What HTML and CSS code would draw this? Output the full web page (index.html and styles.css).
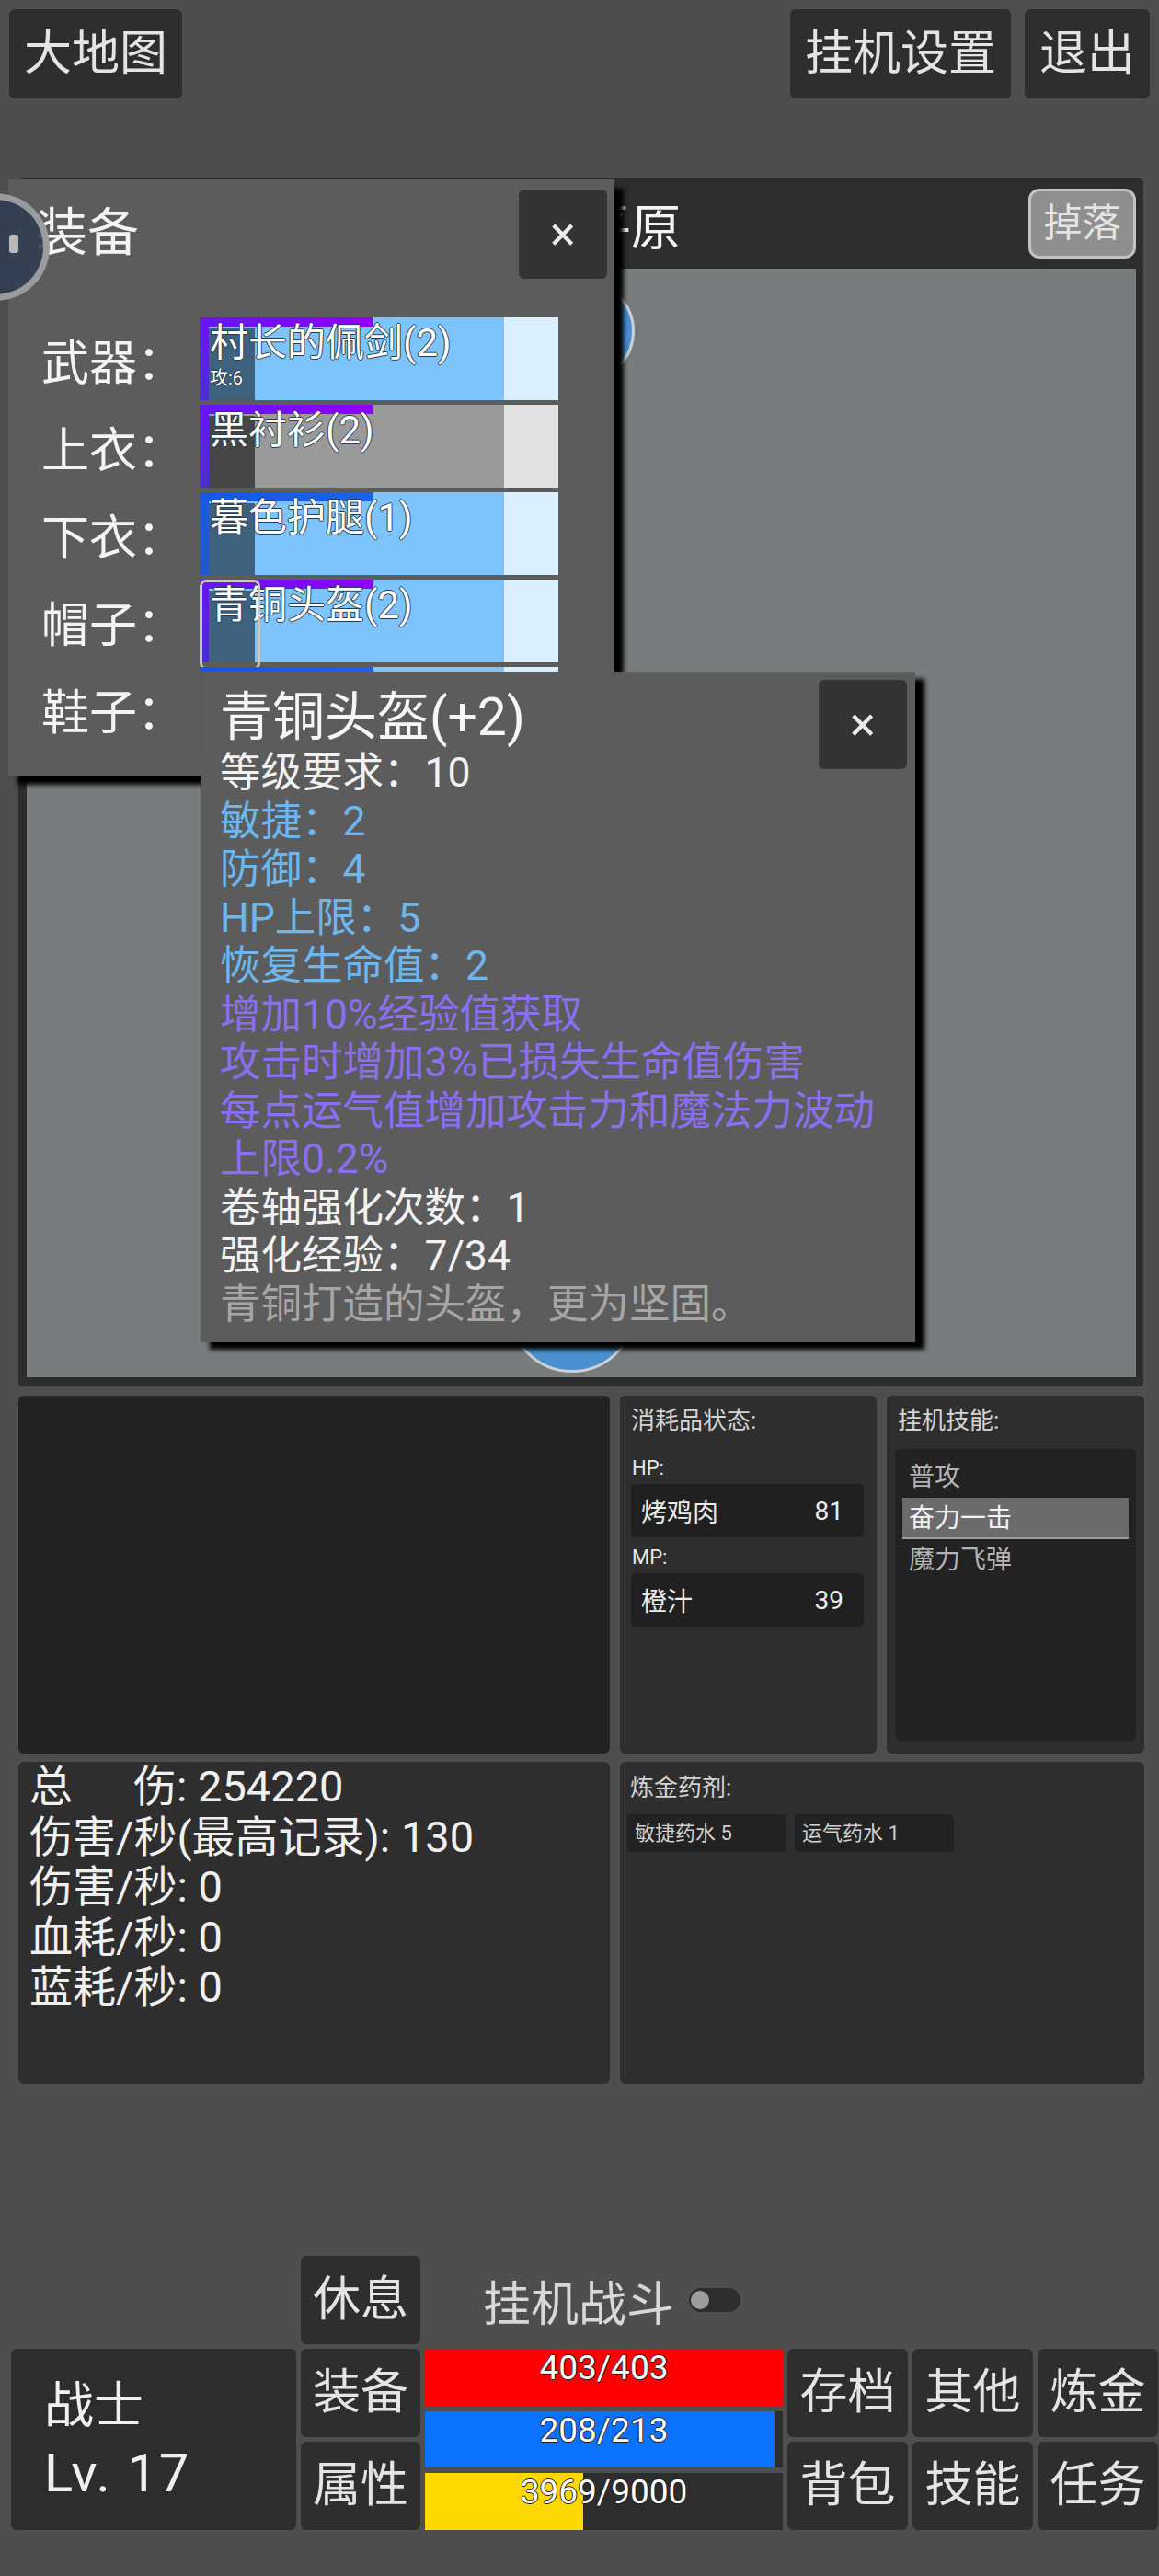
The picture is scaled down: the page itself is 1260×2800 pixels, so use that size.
FILE: index.html
```html
<!DOCTYPE html>
<html lang="zh">
<head>
	<meta charset="UTF-8">
	<title>挂机</title>
	<link rel="stylesheet" href="styles.css">
</head>
<body>
<div class="app">
	<div class="topbar">
		<button class="btn">大地图</button>
		<div class="topbar_right">
			<button class="btn">挂机设置</button>
			<button class="btn">退出</button>
		</div>
	</div>

	<div class="map">
		<div class="map_head">
			<span class="map_title">平原</span>
			<button class="drop_btn">掉落</button>
		</div>
		<div class="map_view">
			<div class="node node_a"></div>
			<div class="node node_b"></div>
		</div>
	</div>

	<div class="info_row">
		<div class="panel log"></div>
		<div class="panel supply">
			<div class="panel_title">消耗品状态:</div>
			<div class="supply_label first">HP:</div>
			<div class="supply_item"><span>烤鸡肉</span><span>81</span></div>
			<div class="supply_label">MP:</div>
			<div class="supply_item"><span>橙汁</span><span>39</span></div>
		</div>
		<div class="panel skills">
			<div class="panel_title">挂机技能:</div>
			<ul class="skill_list">
				<li>普攻</li>
				<li class="on">奋力一击</li>
				<li>魔力飞弹</li>
			</ul>
		</div>
	</div>

	<div class="stats_row">
		<div class="panel stats">
			<div>总<span class="gap"></span>伤: 254220</div>
			<div>伤害/秒(最高记录): 130</div>
			<div>伤害/秒: 0</div>
			<div>血耗/秒: 0</div>
			<div>蓝耗/秒: 0</div>
		</div>
		<div class="panel alchemy">
			<div class="panel_title">炼金药剂:</div>
			<div class="chips">
				<div class="chip">敏捷药水 5</div>
				<div class="chip">运气药水 1</div>
			</div>
		</div>
	</div>

	<div class="control">
		<button class="btn rest">休息</button>
		<div class="auto">挂机战斗<span class="toggle"></span></div>
		<div class="hero">
			<div>战士</div>
			<div class="lv">Lv. 17</div>
		</div>
		<button class="btn c2 r2">装备</button>
		<button class="btn c2 r3">属性</button>
		<div class="bars">
			<div class="bar_line hp"><div class="fill" style="width:100%"></div><span>403/403</span></div>
			<div class="bar_line mp"><div class="fill" style="width:97.7%"></div><span>208/213</span></div>
			<div class="bar_line exp"><div class="fill" style="width:44.1%"></div><span>3969/9000</span></div>
		</div>
		<button class="btn c4 r2">存档</button>
		<button class="btn c5 r2">其他</button>
		<button class="btn c6 r2">炼金</button>
		<button class="btn c4 r3">背包</button>
		<button class="btn c5 r3">技能</button>
		<button class="btn c6 r3">任务</button>
	</div>

	<!-- 装备弹窗 -->
	<div class="equip">
		<div class="equip_head">
			<span class="equip_title">装备</span>
			<button class="close">×</button>
		</div>
		<div class="equip_rows">
			<div class="slot">武器：</div>
			<div class="item purple">
				<div class="item_name">村长的佩剑(2)</div>
				<div class="item_sub">攻:6</div>
			</div>
			<div class="slot">上衣：</div>
			<div class="item purple gray">
				<div class="item_name">黑衬衫(2)</div>
			</div>
			<div class="slot">下衣：</div>
			<div class="item blue">
				<div class="item_name">暮色护腿(1)</div>
			</div>
			<div class="slot">帽子：</div>
			<div class="item purple selected">
				<div class="item_name">青铜头盔(2)</div>
			</div>
			<div class="slot">鞋子：</div>
			<div class="item blue"></div>
		</div>
	</div>

	<!-- 物品详情 -->
	<div class="tip">
		<button class="close">×</button>
		<div class="tip_title">青铜头盔(+2)</div>
		<div class="tip_lines">
			<div class="w">等级要求：10</div>
			<div class="b">敏捷：2</div>
			<div class="b">防御：4</div>
			<div class="b">HP上限：5</div>
			<div class="b">恢复生命值：2</div>
			<div class="p">增加10%经验值获取</div>
			<div class="p">攻击时增加3%已损失生命值伤害</div>
			<div class="p">每点运气值增加攻击力和魔法力波动</div>
			<div class="p">上限0.2%</div>
			<div class="w">卷轴强化次数：1</div>
			<div class="w">强化经验：7/34</div>
			<div class="g">青铜打造的头盔，更为坚固。</div>
		</div>
	</div>

	<div class="ball"></div>
</div>
</body>
</html>
```

FILE: styles.css
```css
* { box-sizing: border-box; }
html, body { margin: 0; padding: 0; background: #4e4e4e; }
body { font-family: Roboto, "Noto Sans CJK SC", sans-serif; color: #e6e6e6; }
ul { margin: 0; padding: 0; } li { list-style: none; }
button { font-family: inherit; cursor: pointer; }

.app { position: relative; width: 1260px; height: 2800px; overflow: hidden; }

.btn { background: #2e2e2e; color: #e4e4e4; border: 0; border-radius: 6px; font-size: 52px; line-height: 1; padding: 0; display: flex; align-items: center; justify-content: center; }

/* 顶部 */
.topbar { display: flex; justify-content: space-between; padding: 10px 10px 0; }
.topbar .btn { height: 97px; padding: 0 16px; }
.topbar_right { display: flex; gap: 15px; }

/* 地图 */
.map { margin: 87px 17px 0 20px; height: 1313px; background: #2d2d2d; border-radius: 4px; padding: 0 8px 10px 9px; display: flex; flex-direction: column; }
.map_head { height: 98px; display: flex; align-items: center; }
.map_title { padding-left: 603px; font-size: 54px; color: #f4f4f4; }
.drop_btn { margin-left: auto; width: 117px; height: 76px; background: #8f8f8f; border: 3px solid #c2c2c2; border-radius: 12px; color: #e4e4e4; font-size: 42px; line-height: 1; padding: 0; }
.map_view { flex: 1; background: #787c7d; position: relative; }
.node { position: absolute; border-radius: 50%; background: #4a8fcf; border: 3px solid #d0d0d0; }
.node_a { left: 551px; top: 13px; width: 110px; height: 110px; }
.node_b { left: 523px; top: 1060px; width: 140px; height: 140px; }

/* 中间面板 */
.info_row { display: grid; grid-template-columns: 643px 279px 280px; gap: 11px; margin: 10px 0 0 20px; height: 389px; }
.panel { background: #2e2e2e; border-radius: 6px; }
.log { background: #222; }
.panel_title { font-size: 26px; line-height: 30px; color: #d4d4d4; }

.supply { padding: 12px 14px 0 12px; }
.supply_label { font-size: 22px; line-height: 26px; color: #e8e8e8; margin: 9px 0 4px 1px; }
.supply_label.first { margin-top: 24px; }
.supply_item { height: 58px; background: #202020; border-radius: 5px; display: flex; justify-content: space-between; align-items: center; padding: 0 22px 0 11px; font-size: 28px; color: #ececec; }

.skills { padding: 12px 9px 0 12px; }
.skill_list { margin: 16px 0 0 -3px; height: 317px; background: #222; border-radius: 6px; padding: 8px 8px 0; }
.skill_list li { height: 45px; line-height: 45px; padding-left: 7px; font-size: 28px; color: #b4b4b4; }
.skill_list li.on { background: #6b6b6b; color: #f2f2f2; border-bottom: 2px solid #9a9a9a; }

/* 统计 */
.stats_row { display: grid; grid-template-columns: 643px 570px; gap: 11px; margin: 9px 0 0 20px; height: 350px; }
.stats { padding: 0 12px; font-size: 47px; line-height: 54.5px; color: #f0f0f0; }
.gap { display: inline-block; width: 66px; }
.alchemy { padding: 13px 8px 0; }
.alchemy .panel_title { padding-left: 3px; }
.chips { display: flex; gap: 9px; margin-top: 14px; }
.chip { width: 173px; height: 41px; background: #222; border-radius: 4px; font-size: 22px; line-height: 41px; padding-left: 8px; color: #cfcfcf; }

/* 底部操作 */
.control { display: grid; grid-template-columns: 310px 130px 389px 131px 131px 131px; grid-template-rows: 96px 96px 96px; gap: 5px; margin: 187px 0 0 12px; }
.rest { grid-area: 1 / 2; }
.auto { grid-area: 1 / 3; display: flex; align-items: center; padding-left: 63px; font-size: 52px; color: #d8d8d8; white-space: nowrap; }
.toggle { width: 56px; height: 26px; margin-left: 16px; border-radius: 13px; background: #2e2e2e; position: relative; flex: none; }
.toggle::after { content: ""; position: absolute; left: 2px; top: 3px; width: 20px; height: 20px; border-radius: 50%; background: #9c9c9c; }
.c2 { grid-column: 2; } .c4 { grid-column: 4; } .c5 { grid-column: 5; } .c6 { grid-column: 6; }
.r2 { grid-row: 2; } .r3 { grid-row: 3; }
.hero { grid-area: 2 / 1 / 4 / 2; background: #2d2d2d; border-radius: 6px; display: flex; flex-direction: column; justify-content: center; padding-left: 36px; font-size: 54px; line-height: 72px; color: #f0f0f0; }
.hero .lv { font-size: 58px; letter-spacing: 2px; }
.bars { grid-area: 2 / 3 / 4 / 4; display: flex; flex-direction: column; gap: 6px; }
.bar_line { flex: 1; position: relative; background: #2d2d2d; text-align: center; }
.bar_line .fill { height: 100%; }
.bar_line span { position: absolute; left: 0; right: 0; top: 0; font-size: 37px; line-height: 42px; color: #fff; text-shadow: -1px 0 #222, 1px 0 #222, 0 -1px #222, 0 1px #222; }
.hp .fill { background: #ff0000; }
.mp .fill { background: #0b72ff; }
.exp .fill { background: #ffd800; }

/* 装备弹窗 */
.equip { position: absolute; left: 9px; top: 195px; width: 659px; height: 648px; background: #5c5c5c; box-shadow: 10px 10px 5px #000; padding: 11px 8px 0 22px; }
.equip_head { display: flex; justify-content: space-between; align-items: center; height: 97px; }
.equip_title { font-size: 56px; color: #f4f4f4; padding-left: 8px; margin-bottom: 14px; }
.close { width: 96px; height: 97px; background: #343434; border: 0; border-radius: 6px; color: #ececec; font-size: 52px; line-height: 1; padding: 0; }
.equip_rows { display: grid; grid-template-columns: 186px 390px; grid-auto-rows: 90px; row-gap: 5px; margin-top: 42px; }
.slot { display: flex; align-items: center; padding-left: 14px; font-size: 52px; color: #f4f4f4; }

.item { position: relative; padding: 5px 0 0 11px; color: #fff; text-shadow: -1px 0 #2a3c52, 1px 0 #2a3c52, 0 -1px #2a3c52, 0 1px #2a3c52;
	background:
		linear-gradient(90deg, #6418f4, #9000ff) 0 0 / 189px 10px no-repeat,
		linear-gradient(180deg, #6a14f6, #4a2ed2) 0 0 / 10px 100% no-repeat,
		linear-gradient(rgba(0,0,0,.5), rgba(0,0,0,.5)) 10px 12px / 50px 100% no-repeat,
		linear-gradient(90deg, #7cc4fb 331px, #d9eefe 331px); }
.item.gray { background:
		linear-gradient(90deg, #6418f4, #9000ff) 0 0 / 189px 10px no-repeat,
		linear-gradient(180deg, #6a14f6, #4a2ed2) 0 0 / 10px 100% no-repeat,
		linear-gradient(rgba(0,0,0,.55), rgba(0,0,0,.55)) 10px 12px / 50px 100% no-repeat,
		linear-gradient(90deg, #9a9a9a 331px, #e2e2e2 331px); }
.item.blue { background:
		linear-gradient(90deg, #1656e4, #1a62ee) 0 0 / 189px 10px no-repeat,
		linear-gradient(180deg, #1a5ae8, #2456c8) 0 0 / 10px 100% no-repeat,
		linear-gradient(rgba(0,0,0,.5), rgba(0,0,0,.5)) 10px 12px / 50px 100% no-repeat,
		linear-gradient(90deg, #7cc4fb 331px, #d9eefe 331px); }
.item.selected::after { content: ""; position: absolute; left: 0; top: 0; width: 60px; height: 92px; border: 3px solid #c8c8c8; border-radius: 7px; }
.item_name { font-size: 42px; line-height: 46px; }
.item_sub { font-size: 20px; line-height: 22px; margin-top: 4px; }

/* 物品详情 */
.tip { position: absolute; left: 218px; top: 730px; width: 777px; height: 729px; background: #5c5c5c; box-shadow: 10px 8px 5px #000; padding: 20px 21px 0; }
.tip .close { float: right; margin: -11px -12px 0 0; }
.tip_title { font-size: 57px; line-height: 60px; color: #f6f6f6; }
.tip_lines { margin-top: 4px; font-size: 44.5px; line-height: 52.5px; }
.tip_lines .w { color: #f2f2f2; }
.tip_lines .b { color: #6db6ee; }
.tip_lines .p { color: #8a6ff0; }
.tip_lines .g { color: #a6a6a6; }

/* 悬浮球 */
.ball { position: absolute; left: -63px; top: 210px; width: 117px; height: 117px; border-radius: 50%; border: 7px solid rgba(172,172,172,.85); background: rgba(46,60,80,.85); }
.ball::after { content: ""; position: absolute; left: 66px; top: 38px; width: 10px; height: 20px; background: #b9b9b9; border-radius: 3px; }
```
